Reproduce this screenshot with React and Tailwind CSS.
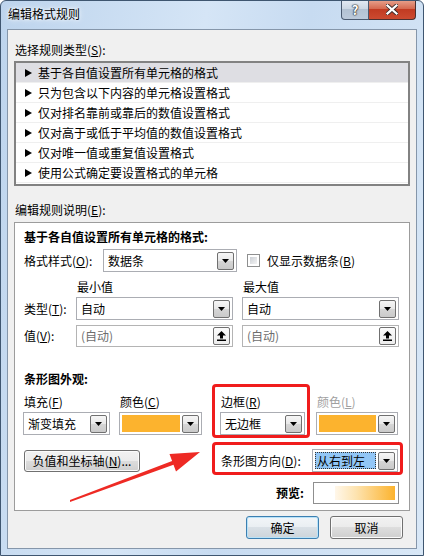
import React from "react";

const rules = [
  "基于各自值设置所有单元格的格式",
  "只为包含以下内容的单元格设置格式",
  "仅对排名靠前或靠后的数值设置格式",
  "仅对高于或低于平均值的数值设置格式",
  "仅对唯一值或重复值设置格式",
  "使用公式确定要设置格式的单元格",
];

function DropBtn() {
  return (
    <span className="flex h-[18px] w-[17px] shrink-0 items-center justify-center rounded-[2px] border border-[#707070] bg-[linear-gradient(#f6f6f6,#e8e8e8_50%,#d6d6d6_50%,#cacaca)]">
      <svg width="7" height="4" viewBox="0 0 7 4">
        <path d="M0 0h7L3.5 4z" fill="#000" />
      </svg>
    </span>
  );
}

function RangeBtn() {
  return (
    <span className="flex h-[18px] w-[17px] shrink-0 items-center justify-center rounded-[2px] border border-[#707070] bg-[linear-gradient(#fbfbfb,#ececec)]">
      <svg width="9" height="10" viewBox="0 0 9 10">
        <path d="M4.5 0L9 4.5H6V7.5H3V4.5H0z" fill="#000" />
        <rect x="0" y="8.5" width="9" height="1.5" fill="#000" />
      </svg>
    </span>
  );
}

function Select({ className, children }) {
  return (
    <div className={`flex h-[23px] items-center border border-[#abadb3] bg-white pl-[3px] pr-[2px] ${className}`}>
      <div className="flex-1 truncate pl-px leading-4">{children}</div>
      <DropBtn />
    </div>
  );
}

function ColorSelect({ className }) {
  return (
    <div className={`flex h-[23px] items-center gap-[2px] border border-[#abadb3] bg-white pl-[2px] pr-[2px] ${className}`}>
      <div className="h-[17px] flex-1 bg-[#fcb32e]" />
      <DropBtn />
    </div>
  );
}

function RangeInput() {
  return (
    <div className="flex h-[22px] w-[157px] items-center border border-[#b4b4b4] bg-white pl-[4px] pr-[2px]">
      <div className="flex-1 leading-4 text-[#6d6d6d]">(自动)</div>
      <RangeBtn />
    </div>
  );
}

function WinButton({ className, children, focus }) {
  return (
    <div
      className={`flex items-center justify-center rounded-[3px] border leading-4 ${
        focus
          ? "border-[#3c7fb1] shadow-[inset_0_0_0_1px_#b8e2f8] bg-[linear-gradient(#f2f5f8,#e9eef2_50%,#d9e0e6_50%,#cdd4da)]"
          : "border-[#707070] shadow-[inset_0_0_0_1px_#fbfbfb] bg-[linear-gradient(#f2f2f2,#ebebeb_50%,#dddddd_50%,#cfcfcf)]"
      } ${className}`}
    >
      {children}
    </div>
  );
}

export default function App() {
  return (
    <div className="relative flex h-[556px] w-[424px] flex-col overflow-hidden rounded-t-[6px] border border-[#3f5670] bg-[linear-gradient(100deg,#bdd4ed,#d5e5f6_40%,#c7dbf1_60%,#d9e8f7)] font-['Noto_Sans_CJK_SC','Noto_Sans',sans-serif] text-[12px] text-black">
      {/* title bar */}
      <div className="flex h-[28px] shrink-0 items-start">
        <div className="ml-[7px] mt-[5px] leading-4 [text-shadow:0_0_6px_#fff,0_0_3px_#fff]">编辑格式规则</div>
        <div className="-mt-px ml-auto mr-[7px] flex">
          <div className="flex h-[20px] w-[28px] items-center justify-center rounded-bl-[4px] border border-t-0 border-[#4a5a70] bg-[linear-gradient(#e4ebf4,#cbd6e3_50%,#b3c2d3_50%,#bccadb)] text-[13px] font-bold leading-none text-white [text-shadow:0_0_1px_#222,0_0_1px_#222,0_0_2px_#222]">
            ?
          </div>
          <div className="flex h-[20px] w-[47px] items-center justify-center rounded-br-[4px] border border-l-0 border-t-0 border-[#4a3030] bg-[linear-gradient(#e8a48f,#d56a51_45%,#c13b22_50%,#cc4a30)]">
            <svg width="12" height="11" viewBox="0 0 12 11">
              <path d="M1.5 1.5L10.5 9.5M10.5 1.5L1.5 9.5" stroke="#3a2a2a" strokeWidth="4" strokeLinecap="square" />
              <path d="M1.5 1.5L10.5 9.5M10.5 1.5L1.5 9.5" stroke="#fff" strokeWidth="2.2" strokeLinecap="square" />
            </svg>
          </div>
        </div>
      </div>

      {/* client area */}
      <div className="mx-[6px] flex h-[520px] shrink-0 flex-col border border-[#8596aa] bg-[#f0f0f0] px-[6px] pt-[12px]">
        <div className="h-4 pl-px leading-4">
          选择规则类型(<u>S</u>):
        </div>

        <div className="mt-[3px] h-[125px] border-2 border-[#828282] bg-white">
          {rules.map((r, i) => (
            <div
              key={r}
              className={`flex h-[20px] items-center border-b border-[#efefef] pl-[9px] ${i === 0 ? "bg-[#dedee3]" : ""}`}
            >
              <svg width="7" height="8" viewBox="0 0 7 8" className="shrink-0">
                <path d="M0 0L7 4L0 8z" fill="#000" />
              </svg>
              <span className="ml-[6px] leading-4">{r}</span>
            </div>
          ))}
        </div>

        <div className="mt-[16px] h-4 pl-px leading-4">
          编辑规则说明(<u>E</u>):
        </div>

        <div className="relative mt-[4px] h-[289px] border border-[#9c9c9c] bg-white pl-[9px] pt-[6px]">
          <div className="h-4 font-bold leading-4">基于各自值设置所有单元格的格式:</div>

          <div className="mt-[4px] flex h-[23px] items-center">
            <div className="w-[79px] leading-4">
              格式样式(<u>O</u>):
            </div>
            <Select className="w-[134px]">数据条</Select>
            <span className="ml-[10px] h-[13px] w-[13px] border border-[#8e8f8f] bg-white p-[2px]">
              <span className="block h-full w-full bg-[linear-gradient(135deg,#cbcfd5,#f4f4f4)]" />
            </span>
            <span className="ml-[7px] leading-4">
              仅显示数据条(<u>B</u>)
            </span>
          </div>

          <div className="mt-[7px] flex h-4 leading-4">
            <div className="w-[52px]" />
            <div className="w-[166px] pl-px">最小值</div>
            <div className="pl-px">最大值</div>
          </div>

          <div className="mt-[2px] flex h-[23px] items-center">
            <div className="w-[52px] leading-4">
              类型(<u>T</u>):
            </div>
            <Select className="w-[157px]">自动</Select>
            <Select className="ml-[9px] w-[157px]">自动</Select>
          </div>

          <div className="mt-[5px] flex h-[22px] items-center">
            <div className="w-[52px] leading-4">
              值(<u>V</u>):
            </div>
            <RangeInput />
            <div className="ml-[9px]">
              <RangeInput />
            </div>
          </div>

          <div className="mt-[24px] h-4 font-bold leading-4">条形图外观:</div>

          <div className="-ml-px mt-[7px] flex">
            <div className="w-[87px]">
              <div className="h-4 pl-px leading-4">
                填充(<u>F</u>)
              </div>
              <Select className="mt-[2px] w-[87px]">渐变填充</Select>
            </div>
            <div className="ml-[9px] w-[83px]">
              <div className="h-4 pl-px leading-4">
                颜色(<u>C</u>)
              </div>
              <ColorSelect className="mt-[2px] w-[83px]" />
            </div>
            <div className="ml-[18px] w-[85px]">
              <div className="h-4 pl-px leading-4">
                边框(<u>R</u>)
              </div>
              <Select className="mt-[2px] w-[85px]">无边框</Select>
            </div>
            <div className="ml-[11px] w-[82px]">
              <div className="h-4 pl-px leading-4 text-[#a0a0a0]">
                颜色(<u>L</u>)
              </div>
              <ColorSelect className="mt-[2px] w-[82px]" />
            </div>
          </div>

          <div className="mt-[14px] flex h-[23px] items-start">
            <WinButton className="mt-px h-[22px] w-[116px]">
              负值和坐标轴(<u>N</u>)...
            </WinButton>
            <div className="ml-[81px] w-[91px] self-center leading-4">
              条形图方向(<u>D</u>):
            </div>
            <div className="flex h-[23px] w-[86px] items-center border border-[#abadb3] bg-white p-[2px]">
              <div className="h-full flex-1 border border-dotted border-[#333] bg-[#92c6f6] pl-[1px] leading-[15px]">
                从右到左
              </div>
              <span className="ml-[2px]">
                <DropBtn />
              </span>
            </div>
          </div>

          <div className="mt-[10px] flex h-[22px] items-center justify-end pr-[10px]">
            <div className="font-bold leading-4">预览:</div>
            <div className="ml-[9px] flex h-[22px] w-[86px] justify-end border border-[#8f8f8f] bg-white p-[3px]">
              <div className="h-full w-[60px] bg-[linear-gradient(90deg,#fff7ea,#fde3b0_35%,#fcb32e)]" />
            </div>
          </div>

          {/* annotation boxes */}
          <div className="absolute left-[197px] top-[161px] h-[54px] w-[98px] rounded-[4px] border-[3px] border-[#f01c1c]" />
          <div className="absolute left-[197px] top-[219px] h-[33px] w-[191px] rounded-[4px] border-[3px] border-[#f01c1c]" />
        </div>

        <div className="mr-[7px] mt-[5px] flex justify-end">
          <WinButton focus className="h-[23px] w-[73px]">
            确定
          </WinButton>
          <WinButton className="ml-[11px] h-[23px] w-[73px]">取消</WinButton>
        </div>
      </div>

      {/* annotation arrow */}
      <svg className="pointer-events-none absolute left-[-1px] top-[-1px]" width="424" height="556" viewBox="0 0 424 556">
        <polygon points="70,502 173.5,464.7 176,471.5 200,452 169.5,454 172.1,460.9 70,500" fill="#ee2a24" />
      </svg>
    </div>
  );
}
